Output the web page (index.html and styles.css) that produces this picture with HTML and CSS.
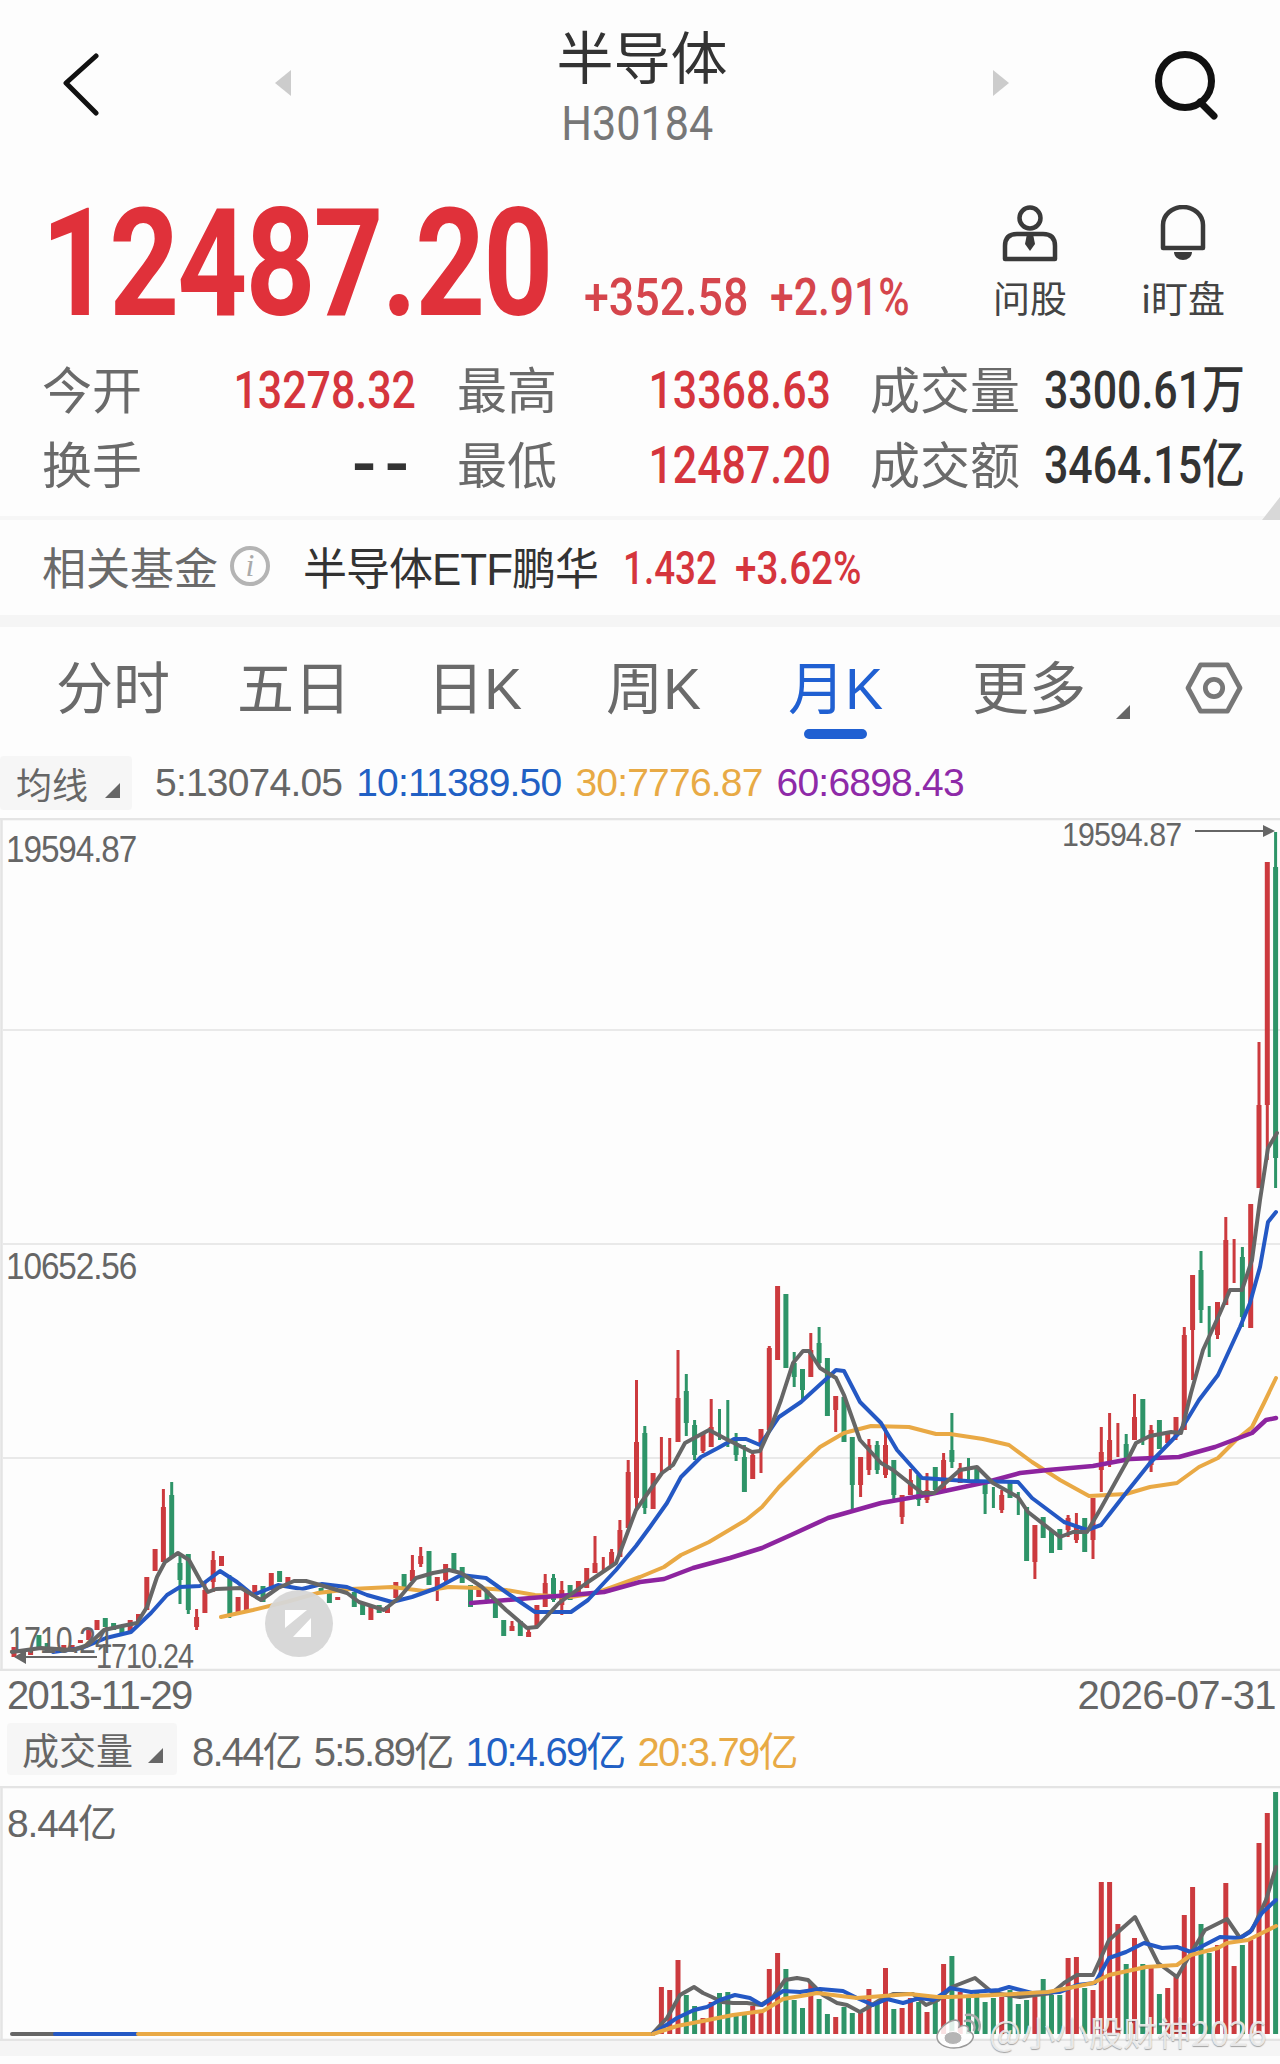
FILE: index.html
```html
<!DOCTYPE html>
<html lang="zh">
<head>
<meta charset="utf-8">
<title>半导体 H30184</title>
<link rel="stylesheet" href="styles.css">
</head>
<body>
<div class="page">
  <header class="nav">
    <svg class="back" viewBox="0 0 38 64"><path d="M34 3 L4 30 L34 60" /></svg>
    <span class="tri tri-left"></span>
    <div class="title-block">
      <div class="title">半导体</div>
      <div class="code">H30184</div>
    </div>
    <span class="tri tri-right"></span>
    <svg class="search" viewBox="0 0 68 70"><circle cx="33" cy="31" r="26.5"/><path d="M48 52 L62 66"/></svg>
  </header>

  <section class="quote">
    <div class="price">12487.20</div>
    <div class="change">+352.58</div>
    <div class="change change-pct">+2.91%</div>
    <div class="tools">
      <div class="tool">
        <svg class="tool-icon" viewBox="0 0 60 58"><circle cx="30" cy="13" r="10.5"/><path d="M5 54 H55 V41 Q55 29 43 29 H17 Q5 29 5 41 Z"/><path class="solid" d="M27 29 H33 L35 39 L30 46 L25 39 Z"/></svg>
        <span>问股</span>
      </div>
      <div class="tool">
        <svg class="tool-icon" viewBox="0 0 60 58"><path d="M10 43 V20 A20 18 0 0 1 50 20 V43 Z"/><path class="solid" d="M21 47 H39 A9 8 0 0 1 21 47 Z"/></svg>
        <span>i盯盘</span>
      </div>
    </div>
  </section>

  <section class="stats">
    <span class="lab">今开</span><span class="val red">13278.32</span>
    <span class="lab">最高</span><span class="val red">13368.63</span>
    <span class="lab">成交量</span><span class="val strong">3300.61万</span>
    <span class="lab">换手</span><span class="val strong dash">--</span>
    <span class="lab">最低</span><span class="val red">12487.20</span>
    <span class="lab">成交额</span><span class="val strong">3464.15亿</span>
  </section>
  <div class="corner-row"><span class="corner"></span></div>

  <section class="fund">
    <span class="fund-label">相关基金</span>
    <span class="info">i</span>
    <span class="fund-name">半导体ETF鹏华</span>
    <span class="fund-num fund-price red">1.432</span>
    <span class="fund-num fund-pct red">+3.62%</span>
  </section>

  <nav class="tabs">
    <span class="tab tab-1">分时</span>
    <span class="tab tab-2">五日</span>
    <span class="tab tab-3">日K</span>
    <span class="tab tab-4">周K</span>
    <span class="tab tab-5 active">月K</span>
    <span class="tab tab-6">更多</span>
    <span class="more-tri"></span>
    <svg class="hex" viewBox="0 0 60 54"><path d="M16 3 H44 L57 27 L44 51 H16 L3 27 Z"/><circle cx="30" cy="27" r="9"/></svg>
  </nav>

  <div class="legend legend-ma">
    <span class="chip chip-ma">均线<i class="chip-tri"></i></span>
    <span class="leg grey">5:13074.05</span>
    <span class="leg blue">10:11389.50</span>
    <span class="leg orange">30:7776.87</span>
    <span class="leg purple">60:6898.43</span>
  </div>

  <div class="chart chart-main">
    <svg class="plot" viewBox="0 818 1280 853">
      <path class="frame" d="M0 819 H1280 M1.5 819 V1670 M0 1670 H1280"/>
      <path class="grid" d="M3 1030 H1280 M3 1244 H1280 M3 1458 H1280"/>
      <path class="wick r" d="M163.4 1489V1562M196.6 1609V1630M204.9 1582V1613M213.2 1551V1592M412.4 1555V1581M420.7 1547V1567M437.3 1577V1601M445.6 1564V1585M478.8 1585V1597M512 1621V1631M528.6 1628V1637M545.2 1574V1607M561.8 1581V1615M595 1536V1573M603.3 1557V1572M611.6 1549V1565M619.9 1520V1557M628.2 1460V1528M636.5 1380V1510M661.4 1437V1473M669.7 1438V1470M678 1350V1442M703 1432V1453M711.2 1399V1447M752.7 1453V1479M761 1429V1473M769.3 1346V1430M777.6 1286V1360M810.8 1333V1377M835.7 1396V1432M860.6 1457V1497M868.9 1439V1475M885.5 1427V1478M902.1 1495V1524M910.4 1469V1495M927 1473V1503M943.6 1453V1490M960.2 1463V1483M1001.7 1490V1513M1034.9 1525V1579M1068.1 1515V1537M1076.4 1513V1543M1093 1498V1559M1101.3 1427V1492M1109.6 1413V1467M1117.9 1423V1457M1134.5 1394V1440M1151.1 1425V1472M1167.7 1433V1443M1176 1417V1440M1184.3 1327V1430M1192.6 1275V1380M1217.5 1302V1339M1225.8 1217V1305M1234.1 1239V1283M1250.7 1204V1328M1259 1042V1188M1267.3 862V1160"/>
      <path class="body r" d="M14 1647V1657M30.6 1648V1655M63.8 1645V1650M72.1 1645V1650M80.4 1640V1643M88.7 1630V1640M97 1620V1630M130.2 1620V1632M138.5 1614V1623M146.8 1577V1610M155.1 1549V1571M163.4 1507V1562M196.6 1617V1627M204.9 1590V1613M213.2 1560V1582M221.5 1556V1566M238.1 1597V1613M246.4 1591V1611M254.7 1585V1593M271.3 1573V1590M287.9 1577V1583M337.7 1597V1600M370.9 1607V1620M387.5 1606V1613M395.8 1582V1598M412.4 1570V1581M420.7 1556V1564M437.3 1577V1590M445.6 1564V1580M478.8 1590V1597M512 1626V1631M528.6 1632V1637M536.9 1605V1627M545.2 1583V1607M561.8 1590V1605M578.4 1581V1597M586.7 1568V1588M595 1563V1573M611.6 1552V1565M619.9 1530V1557M628.2 1472V1528M636.5 1442V1498M653.1 1473V1509M678 1398V1442M703 1434V1451M711.2 1427V1447M752.7 1455V1479M761 1429V1443M769.3 1348V1430M777.6 1286V1360M810.8 1350V1377M835.7 1396V1410M860.6 1457V1485M868.9 1445V1470M885.5 1445V1475M902.1 1495V1517M910.4 1480V1495M927 1490V1500M943.6 1460V1490M960.2 1468V1483M1001.7 1495V1510M1034.9 1525V1562M1068.1 1518V1530M1076.4 1525V1540M1093 1498V1540M1101.3 1452V1470M1109.6 1440V1463M1134.5 1417V1440M1151.1 1430V1465M1167.7 1433V1443M1176 1417V1436M1184.3 1335V1430M1192.6 1275V1330M1217.5 1302V1335M1225.8 1240V1305M1250.7 1204V1328M1259 1105V1188M1267.3 862V1105"/>
      <path class="wick g" d="M171.7 1482V1557M180 1553V1604M188.3 1554V1614M229.8 1575V1618M553.5 1574V1602M644.8 1426V1514M686.3 1374V1436M694.6 1420V1460M736.1 1433V1461M744.4 1445V1492M794.2 1352V1387M819.1 1327V1367M852.3 1437V1510M893.8 1460V1500M918.7 1475V1506M951.9 1413V1468M985.1 1482V1514M1126.2 1434V1463M1201 1251V1323M1209.2 1306V1357M1242.4 1247V1327M1275.6 832V1188M785.9 1294V1368M802.5 1369V1400M727.8 1400V1447M719.5 1409V1440M877.2 1441V1474M968.5 1458V1483M993.4 1487V1508M1018.3 1492V1515M1142.8 1399V1445"/>
      <path class="body g" d="M38.9 1635V1647M47.2 1643V1653M55.5 1648V1653M105.3 1618V1627M113.6 1623V1630M121.9 1625V1635M171.7 1495V1557M180 1563V1580M188.3 1554V1610M229.8 1577V1614M263 1586V1602M279.6 1571V1582M321.1 1588V1593M329.4 1592V1603M354.3 1592V1607M362.6 1603V1615M379.2 1605V1613M404.1 1574V1587M429 1551V1585M453.9 1553V1570M462.2 1567V1583M470.5 1585V1607M487.1 1590V1600M495.4 1600V1618M503.7 1620V1636M520.3 1621V1636M553.5 1578V1600M570.1 1585V1600M644.8 1433V1508M686.3 1391V1423M694.6 1425V1455M736.1 1443V1455M744.4 1457V1492M785.9 1294V1368M794.2 1363V1377M802.5 1369V1390M819.1 1343V1363M827.4 1358V1416M844 1397V1442M852.3 1437V1485M877.2 1445V1470M893.8 1460V1495M918.7 1475V1500M935.3 1467V1490M951.9 1450V1462M976.8 1467V1483M985.1 1482V1494M1010 1482V1498M1026.6 1507V1561M1043.2 1517V1538M1051.5 1530V1553M1059.8 1529V1550M1084.7 1518V1552M1126.2 1444V1460M1142.8 1399V1440M1159.4 1420V1449M1201 1270V1310M1242.4 1257V1317M1275.6 867V1158"/>
      <polyline class="line orange-l" points="221,1617 253,1610 286,1602 318,1593 351,1589 392,1587 424,1591 449,1587 478,1588 506,1590 535,1595 571,1597 596,1593 640,1577 664,1567 681,1555 709,1542 746,1520 762,1507 779,1487 803,1463 820,1447 844,1433 871,1426 909,1427 936,1434 950,1434 983,1439 1009,1445 1032,1462 1060,1480 1089,1496 1126,1494 1150,1487 1177,1483 1199,1467 1218,1458 1236,1440 1252,1427 1264,1403 1276,1378"/>
      <polyline class="line purple-l" points="471,1603 531,1598 571,1595 604,1592 640,1582 664,1579 693,1568 730,1558 762,1548 791,1535 828,1518 881,1503 926,1495 987,1482 1020,1473 1048,1470 1093,1466 1130,1459 1179,1457 1215,1447 1252,1433 1266,1420 1276,1418"/>
      <polyline class="line blue-l" points="53,1652 82,1648 106,1638 131,1632 151,1613 167,1595 180,1587 200,1586 220,1571 237,1582 253,1595 278,1585 302,1589 322,1584 347,1587 367,1595 392,1602 412,1597 437,1588 461,1575 486,1578 510,1595 535,1612 571,1612 588,1600 616,1570 636,1546 650,1527 667,1503 681,1477 701,1457 718,1448 734,1439 746,1439 760,1445 779,1417 801,1402 836,1370 844,1371 860,1402 881,1423 897,1450 922,1478 967,1481 1018,1482 1032,1498 1064,1522 1087,1530 1101,1525 1122,1498 1150,1463 1179,1433 1199,1400 1218,1375 1240,1327 1250,1303 1260,1267 1268,1222 1276,1212"/>
      <polyline class="line grey-l" points="12,1652 41,1648 73,1650 88,1645 104,1630 122,1626 137,1623 147,1607 157,1577 165,1562 178,1553 189,1560 200,1580 208,1592 216,1589 241,1588 261,1600 278,1588 294,1581 306,1581 327,1587 347,1593 359,1602 384,1610 400,1597 416,1578 433,1573 449,1570 461,1573 482,1587 506,1610 527,1628 537,1627 559,1603 588,1582 616,1563 636,1510 650,1490 662,1473 673,1465 685,1443 709,1430 726,1439 752,1452 760,1451 771,1427 781,1400 793,1363 803,1351 809,1351 820,1368 836,1378 844,1395 860,1440 881,1463 893,1470 922,1493 934,1493 960,1470 977,1467 993,1483 1018,1497 1028,1512 1060,1537 1073,1532 1087,1532 1101,1508 1126,1463 1136,1443 1150,1436 1171,1432 1181,1433 1191,1393 1203,1350 1220,1313 1230,1290 1242,1290 1252,1260 1260,1200 1268,1148 1277,1133"/>
      <path class="arrow-line" d="M1195 831 H1265 M26 1657 H97"/>
      <path class="arrow-head" d="M1263 825 L1275 831 L1263 837 Z M14 1657 L26 1650 V1664 Z"/>
    </svg>
    <span class="axis axis-top">19594.87</span>
    <span class="axis axis-mid">10652.56</span>
    <span class="axis axis-high">19594.87</span>
    <span class="axis axis-low">1710.24</span>
    <span class="axis axis-lowmark">1710.24</span>
    <span class="badge">
      <svg class="badge-icon" viewBox="0 0 40 40"><path d="M6 6 H28 L6 24 Z M32 14 V33 H14 Z"/></svg>
    </span>
  </div>

  <div class="dates"><span class="date-start">2013-11-29</span><span>2026-07-31</span></div>

  <div class="legend legend-vol">
    <span class="chip chip-vol">成交量<i class="chip-tri"></i></span>
    <span class="leg grey">8.44亿</span>
    <span class="leg grey">5:5.89亿</span>
    <span class="leg blue">10:4.69亿</span>
    <span class="leg orange">20:3.79亿</span>
  </div>

  <div class="chart chart-vol">
    <svg class="plot" viewBox="0 1786 1280 255">
      <path class="frame" d="M0 1787 H1280 M1.5 1787 V2040 M0 2040 H1280"/>
      <path class="vbar r" d="M661.4 1987V2034M669.7 1990V2034M678 1960V2034M703 2018V2034M711.2 2002V2034M752.7 2006V2034M761 2010V2034M769.3 1969V2034M777.6 1953V2034M810.8 1983V2034M835.7 2017V2034M860.6 2013V2034M868.9 1989V2034M885.5 1968V2034M902.1 2008V2034M910.4 1998V2034M927 2012V2034M943.6 1964V2034M960.2 1992V2034M1001.7 1997V2034M1034.9 1997V2034M1068.1 1958V2034M1076.4 1957V2034M1093 1990V2034M1101.3 1882V2034M1109.6 1882V2034M1117.9 1924V2034M1134.5 1938V2034M1151.1 1968V2034M1167.7 1988V2034M1176 1975V2034M1184.3 1915V2034M1192.6 1887V2034M1217.5 1945V2034M1225.8 1883V2034M1234.1 1966V2034M1250.7 1940V2034M1259 1843V2034M1267.3 1813V2034"/>
      <path class="vbar g" d="M686.3 1995V2034M694.6 2006V2034M719.5 1993V2034M727.8 1992V2034M736.1 2015V2034M744.4 2015V2034M785.9 1969V2034M794.2 2000V2034M802.5 2008V2034M819.1 1999V2034M827.4 2014V2034M844 2007V2034M852.3 2013V2034M877.2 2003V2034M893.8 2009V2034M918.7 2002V2034M935.3 1998V2034M951.9 1956V2034M968.5 1995V2034M976.8 1993V2034M985.1 2002V2034M993.4 1998V2034M1010 1990V2034M1018.3 2004V2034M1026.6 2000V2034M1043.2 1979V2034M1051.5 1995V2034M1059.8 1995V2034M1084.7 1988V2034M1126.2 1964V2034M1142.8 1964V2034M1159.4 1994V2034M1201 1924V2034M1209.2 1953V2034M1242.4 1945V2034M1275.6 1792V2034"/>
      <path class="line grey-l" d="M12 2034 H55"/>
      <path class="line blue-l" d="M55 2034 H138"/>
      <path class="line orange-l" d="M138 2034 H653"/>
      <polyline class="line grey-l" points="653,2033 667,2018 680,1995 694,1987 703,1993 712,1997 722,2002 733,2003 747,2003 761,2005 773,1997 785,1980 797,1978 808,1980 823,1995 837,2003 847,2005 860,2012 867,2008 880,2000 893,1994 913,1994 926,2005 938,2000 952,1987 975,1978 993,1993 1020,1997 1052,1993 1064,1983 1077,1975 1093,1975 1109,1940 1135,1917 1158,1963 1177,1977 1191,1953 1205,1930 1227,1919 1240,1938 1252,1930 1266,1900 1276,1867"/>
      <polyline class="line blue-l" points="653,2034 677,2018 694,2010 707,2007 720,2000 735,1995 750,1998 762,2005 783,1991 800,1992 820,1989 843,1991 857,1998 873,2005 887,1999 903,2003 920,1998 933,2000 944,1993 950,1988 971,1992 999,1990 1009,1987 1032,1993 1060,1992 1077,1985 1095,1983 1109,1958 1126,1952 1144,1943 1162,1948 1177,1947 1191,1952 1220,1937 1240,1938 1250,1932 1262,1913 1276,1900"/>
      <polyline class="line orange-l" points="653,2034 677,2026 703,2021 733,2015 763,2011 783,1999 807,1995 817,1993 833,1995 857,1998 883,1996 910,1994 937,1997 950,1997 995,1995 1048,1992 1069,1988 1093,1983 1109,1975 1146,1967 1177,1965 1191,1955 1218,1948 1227,1943 1248,1940 1276,1926"/>
    </svg>
    <span class="axis axis-vol">8.44亿</span>
  </div>
  <div class="foot-band"></div>

  <div class="watermark">
    <svg class="wb" viewBox="0 0 46 38"><path class="wb-body" d="M19 35 C9 35 2 30 2 24 C2 17 12 8 20 7 C24 7 25 10 24 14 C30 11 35 13 33 18 C37 19 39 22 38 25 C36 31 28 35 19 35 Z"/><ellipse class="wb-eye" cx="18" cy="25" rx="9" ry="6.5"/><path class="wb-arc" d="M30 8 C36 6 41 11 39 17 M31 2 C40 0 47 8 44 17"/></svg>
    <span>@小小股财神2026</span>
  </div>
</div>
</body>
</html>
```
FILE: styles.css
```css
* { box-sizing: border-box; }
html, body { margin: 0; padding: 0; background: #fdfdfd; }
body { font-family: "Noto Sans CJK SC", sans-serif; color: #666; }
.page { position: relative; width: 1280px; height: 2064px; overflow: hidden; background: #fdfdfd; }

.red { color: #d5353d; }
.grey { color: #666; }
.blue { color: #2160c4; }
.orange { color: #e8aa45; }
.purple { color: #8e2aa8; }

/* nav */
.nav { display: flex; align-items: flex-start; height: 160px; }
.back { width: 38px; height: 64px; margin: 53px 0 0 62px; fill: none; stroke: #111; stroke-width: 5; stroke-linecap: round; stroke-linejoin: round; }
.tri { width: 0; height: 0; margin-top: 70px; border-top: 13px solid transparent; border-bottom: 13px solid transparent; flex: none; }
.tri-left { margin-left: 175px; border-right: 16px solid #ccc; }
.tri-right { border-left: 16px solid #ccc; }
.title-block { width: 702px; text-align: center; }
.title { font-size: 57px; line-height: 60px; margin-top: 24px; color: #333; }
.code { display: inline-block; margin: 15px 10px 0 0; font-family: "Roboto", sans-serif; font-size: 49px; line-height: 50px; color: #777; transform: scaleX(.88); }
.search { width: 68px; height: 70px; margin: 50px 0 0 143px; fill: none; stroke: #111; stroke-width: 7; stroke-linecap: round; }

/* quote */
.quote { display: flex; align-items: baseline; height: 192px; padding: 29px 47px 0 41px; font-family: "Roboto", sans-serif; white-space: nowrap; }
.price { width: 502px; font-size: 151px; line-height: 150px; font-weight: 700; color: #e0313a; letter-spacing: -2.5px; transform: scaleX(.81); transform-origin: left; flex: none; }
.change { width: 163px; font-size: 52px; font-weight: 500; color: #d5454c; margin-left: 41px; transform: scaleX(.86); transform-origin: left; flex: none; }
.change-pct { width: 140px; margin-left: 23px; transform: scaleX(.82); }
.tools { display: flex; gap: 53px; margin-left: auto; align-self: flex-start; margin-top: 16px; font-family: "Noto Sans CJK SC", sans-serif; }
.tool { display: flex; flex-direction: column; align-items: center; width: 100px; font-size: 37px; line-height: 46px; color: #444; }
.tool-icon { width: 60px; height: 58px; fill: none; stroke: #3a3a3a; stroke-width: 4.5; stroke-linejoin: round; margin-bottom: 11px; }
.tool-icon .solid { fill: #3a3a3a; stroke: none; }

/* stats */
.stats { display: grid; grid-template-columns: 98px 276px 139px 276px 164px 250px; grid-auto-rows: 75px; align-items: center; padding-left: 42px; }
.lab { font-size: 50px; line-height: 75px; color: #6a6a6a; white-space: nowrap; padding-bottom: 4px; }
.lab:nth-child(6n+3) { margin-left: 41px; }
.lab:nth-child(6n+5) { margin-left: 39px; }
.val { font-family: "Roboto", "Noto Sans CJK SC", sans-serif; font-size: 52px; line-height: 75px; text-align: right; font-weight: 500; white-space: nowrap; padding-top: 2px; transform: scaleX(.825); transform-origin: right; }
.strong { color: #333; }
.stats .dash { letter-spacing: 4px; font-weight: 900; transform: scaleX(1.2); }
.corner-row { display: flex; justify-content: flex-end; height: 18px; background: linear-gradient(#fdfdfd 14px, #f6f6f6 14px); }
.corner { width: 0; height: 0; margin-top: -5px; border-bottom: 23px solid #d8d8d8; border-left: 18px solid transparent; }

/* fund */
.fund { display: flex; align-items: center; height: 95px; padding: 0 0 4px 42px; background: #fdfdfd; white-space: nowrap; }
.fund-label { font-size: 44px; color: #6a6a6a; }
.info { width: 40px; height: 40px; margin-left: 12px; border: 4px solid #b4b4b4; border-radius: 50%; display: flex; align-items: center; justify-content: center; font: italic 32px "Liberation Serif", serif; color: #aaa; }
.fund-name { font-family: "Liberation Sans", "Noto Sans CJK SC", sans-serif; font-size: 44px; color: #333; margin-left: 33px; letter-spacing: -1px; }
.fund-num { font-family: "Roboto", sans-serif; font-size: 46px; font-weight: 500; transform-origin: left; flex: none; padding-top: 4px; }
.fund-price { width: 91px; margin-left: 25px; transform: scaleX(.8); }
.fund-pct { width: 124px; margin-left: 21px; transform: scaleX(.84); }

/* tabs */
.tabs { position: relative; height: 130px; border-top: 12px solid #f5f5f5; font-size: 57px; color: #6a6a6a; }
.tab { position: absolute; top: 22px; line-height: 80px; white-space: nowrap; font-family: "Liberation Sans", "Noto Sans CJK SC", sans-serif; }
.tab-1 { left: 56px; }
.tab-2 { left: 237px; }
.tab-3 { left: 427px; }
.tab-4 { left: 606px; }
.tab-5 { left: 788px; }
.tab-6 { left: 972px; }
.active { color: #2060d2; }
.active::after { content: ""; position: absolute; left: 16px; bottom: -10px; width: 63px; height: 10px; border-radius: 5px; background: #2060d2; }
.more-tri { position: absolute; left: 1116px; top: 78px; width: 0; height: 0; border-bottom: 14px solid #666; border-left: 14px solid transparent; }
.hex { position: absolute; left: 1185px; top: 35px; width: 58px; height: 52px; fill: none; stroke: #777; stroke-width: 5; stroke-linejoin: round; }

/* legends */
.legend { display: flex; align-items: center; font-family: "Liberation Sans", "Noto Sans CJK SC", sans-serif; white-space: nowrap; }
.legend-ma { height: 73px; font-size: 39px; padding-top: 2px; }
.chip { display: flex; align-items: center; height: 54px; background: #f6f6f6; border-radius: 4px; color: #666; position: relative; font-family: "Noto Sans CJK SC", sans-serif; }
.chip-ma { width: 132px; padding-left: 16px; font-size: 36px; }
.chip-tri { position: absolute; bottom: 12px; width: 0; height: 0; border-bottom: 15px solid #666; border-left: 15px solid transparent; }
.chip-ma .chip-tri { left: 105px; }
.legend-ma .leg { margin-right: 14px; letter-spacing: -.8px; }
.chip-ma + .leg { margin-left: 23px; }
.legend-vol { height: 64px; padding: 0 0 10px 7px; font-size: 40px; }
.chip-vol { width: 170px; height: 52px; padding-left: 15px; font-size: 37px; margin-right: 15px; }
.chip-vol .chip-tri { left: 141px; }
.legend-vol .leg { margin-right: 13px; letter-spacing: -1.8px; }

/* charts */
.chart { position: relative; }
.chart-main { height: 853px; }
.chart-vol { height: 255px; }
.plot { display: block; width: 1280px; height: 100%; fill: none; }
.frame { stroke: #e4e4e4; stroke-width: 2.5; }
.grid { stroke: #e2e2e2; stroke-width: 1.5; }
.wick { stroke-width: 3; }
.body { stroke-width: 5; }
.vbar { stroke-width: 5; }
.r { stroke: #cc3a3e; }
.g { stroke: #2e9468; }
.line { fill: none; stroke-width: 4; stroke-linejoin: round; stroke-linecap: round; }
.grey-l { stroke: #666; }
.blue-l { stroke: #2458c4; }
.orange-l { stroke: #e9a945; }
.purple-l { stroke: #8d249f; stroke-width: 4.5; }
.arrow-line { stroke: #666; stroke-width: 2; }
.arrow-head { fill: #666; }
.axis { position: absolute; font-family: "Liberation Sans", sans-serif; font-size: 37px; line-height: 40px; color: #666; letter-spacing: -1.2px; white-space: nowrap; transform-origin: left; transform: scaleX(.9); }
.axis-top { left: 6px; top: 12px; }
.axis-mid { left: 6px; top: 429px; }
.axis-high { left: 1062px; top: -3px; font-size: 33px; letter-spacing: -1px; transform: scaleX(.92); }
.axis-low { left: 8px; top: 803px; transform: scaleX(.82); }
.axis-lowmark { left: 96px; top: 818px; font-size: 35px; transform: scaleX(.82); }
.badge { position: absolute; left: 265px; top: 772px; width: 68px; height: 67px; border-radius: 50%; background: rgba(214, 214, 214, .95); display: flex; align-items: center; justify-content: center; }
.badge-icon { width: 40px; height: 40px; fill: #fff; }
.axis-vol { left: 7px; top: 18px; font-size: 39px; font-family: "Liberation Sans", "Noto Sans CJK SC", sans-serif; transform: none; }

.dates { display: flex; justify-content: space-between; height: 51px; padding: 2px 4px 0 7px; font-family: "Liberation Sans", sans-serif; font-size: 40px; line-height: 44px; letter-spacing: -.6px; color: #666; }
.date-start { letter-spacing: -1.7px; }
.foot-band { height: 15px; background: #f5f5f5; }

.watermark { position: absolute; left: 935px; top: 2010px; display: flex; align-items: center; gap: 8px; font-size: 34px; line-height: 44px; color: rgba(238, 238, 238, .92); text-shadow: 0 1px 1px rgba(60, 60, 60, .45); white-space: nowrap; }
.wb { width: 46px; height: 38px; }
.wb-body { fill: rgba(255, 255, 255, .85); stroke: #9a9a9a; stroke-width: 1.5; }
.wb-eye { fill: #b5b5b5; stroke: #fff; stroke-width: 1; }
.wb-arc { fill: none; stroke: #aaa; stroke-width: 2.5; stroke-linecap: round; }
```
